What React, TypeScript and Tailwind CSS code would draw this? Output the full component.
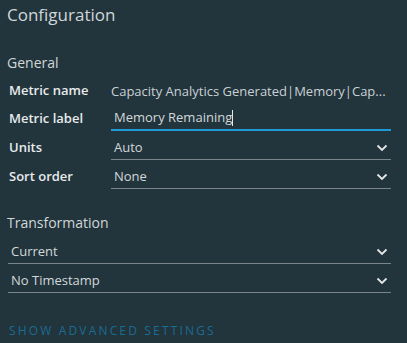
function Chevron() {
  return (
    <svg width="12" height="8" viewBox="0 0 12 8" className="text-[#e6e6e6]">
      <path d="M1.5 1.5 L6 6 L10.5 1.5" fill="none" stroke="currentColor" strokeWidth="1.8" />
    </svg>
  );
}

function Select({ value }: { value: string }) {
  return (
    <div className="flex items-center justify-between h-[24px] border-b border-[#7a8589] pl-[3px] pr-[3px]">
      <span className="text-[13px] text-[#d2d8db]">{value}</span>
      <Chevron />
    </div>
  );
}

function Row({ label, children }: { label: string; children: React.ReactNode }) {
  return (
    <div className="grid grid-cols-[104px_1fr] items-center">
      <span className="pl-[2px] text-[13px] font-semibold text-[#e8ebec]">{label}</span>
      {children}
    </div>
  );
}

export default function App() {
  return (
    <div
      className="w-[407px] h-[343px] bg-[#22343c] pl-[7px] pr-[16px] pt-[4px] overflow-hidden"
      style={{ fontFamily: '"Open Sans", "Liberation Sans", sans-serif' }}
    >
      <h2 className="text-[17px] leading-[22px] text-[#d0d7da]">Configuration</h2>

      <h3 className="mt-[27px] text-[14px] leading-[20px] text-[#d0d7da]">General</h3>

      <div className="mt-[7px] flex flex-col gap-[5px]">
        <Row label="Metric name">
          <span className="text-[13px] leading-[22px] text-[#c9d1d5] whitespace-nowrap">
            Capacity Analytics Generated|Memory|Cap...
          </span>
        </Row>
        <Row label="Metric label">
          <div className="h-[24px] border-b-2 border-[#1e9bd7] pl-[3px] flex items-center">
            <span className="text-[13px] text-[#d2d8db]">Memory Remaining</span>
            <span className="w-px h-[16px] bg-[#e6e6e6]" />
          </div>
        </Row>
        <Row label="Units">
          <Select value="Auto" />
        </Row>
        <Row label="Sort order">
          <Select value="None" />
        </Row>
      </div>

      <h3 className="mt-[24px] text-[14px] leading-[20px] text-[#d0d7da]">Transformation</h3>

      <div className="mt-[7px] flex flex-col gap-[5px] pl-[1px]">
        <Select value="Current" />
        <Select value="No Timestamp" />
      </div>

      <button className="mt-[29px] text-[12px] tracking-[0.18em] text-[#1b6c93] uppercase pl-[2px]">
        Show advanced settings
      </button>
    </div>
  );
}
